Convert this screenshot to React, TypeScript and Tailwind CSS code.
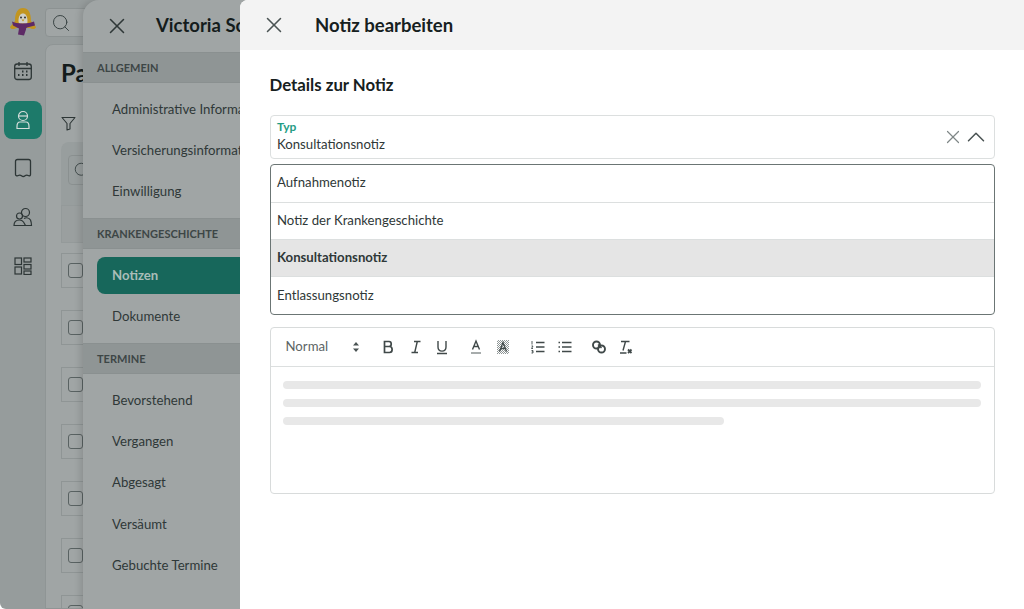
import { Search, X, ChevronUp } from "lucide-react";

const font = { fontFamily: "Lato, 'Noto Sans', sans-serif" };

const allgemein = ["Administrative Informationen", "Versicherungsinformationen", "Einwilligung"];
const termine = ["Bevorstehend", "Vergangen", "Abgesagt", "Versäumt", "Gebuchte Termine"];
const options = ["Aufnahmenotiz", "Notiz der Krankengeschichte", "Konsultationsnotiz", "Entlassungsnotiz"];

const Logo = () => (
  <svg width="32" height="30" viewBox="0 0 30 30">
    <path d="M7 14C7 5 10 1 15 1s8 4 8 13l5 6c0 2-4 3-6 1H8c-2 2-6 1-6-1z" fill="#c29520" />
    <path d="M10.500 14c0-5 1.800-7.500 4.500-7.500s4.500 2.500 4.500 7.500-2 2.500-4.500 2.500-4.500 1-4.500-2.500z" fill="#cfcfc8" />
    <circle cx="13" cy="10.500" r="1" fill="#333" />
    <circle cx="17" cy="10.500" r="1" fill="#333" />
    <path d="M13.500 12.500h3L15 14.500z" fill="#c29520" />
    <path d="M4 14.500c4 2.500 17 2.500 22 0l1 4-8 2-1 1 0 1-2 6-6-1 1-6-6-3z" fill="#5e2a66" />
  </svg>
);

const CalendarIcon = () => (
  <svg width="20" height="20" viewBox="0 0 20 20" fill="none" stroke="#2d3636" strokeWidth="1.300">
    <rect x="1.700" y="3" width="16.600" height="15.500" rx="2.500" />
    <path d="M1.700 7.500h16.600M6 1v4M14 1v4" />
    <path d="M9 10.500h1.500M13 10.500h1.500M5 14h1.500M9 14h1.500M13 14h1.500" strokeWidth="1.800" />
  </svg>
);

const PatientIcon = () => (
  <svg width="20" height="20" viewBox="0 0 20 20" fill="none" stroke="#d5dedb" strokeWidth="1.200">
    <circle cx="10" cy="6" r="4.500" />
    <path d="M5.500 6h9" />
    <path d="M7 12h6c2 0 3 2 3 4.500v2H4v-2C4 14 5 12 7 12z" />
  </svg>
);

const BookmarkIcon = () => (
  <svg width="18" height="20" viewBox="0 0 18 20" fill="none" stroke="#2d3636" strokeWidth="1.300">
    <path d="M1.500 3.500c0-1.200.8-2 2-2h11c1.200 0 2 .8 2 2v13c0 1-.8 1.600-1.700 1.200-1.500-.8-2.800-.8-3.800 0-1 .9-2.500 .9-3.500 0-1-.8-2.300-.8-3.800 0-.9.4-2.200-.2-2.200-1.200z" />
  </svg>
);

const PeopleIcon = () => (
  <svg width="20" height="20" viewBox="0 0 20 20" fill="none" stroke="#2d3636" strokeWidth="1.200">
    <circle cx="12.500" cy="5.500" r="4" />
    <circle cx="6.500" cy="9" r="3" />
    <path d="M1 18.500c0-3.500 2-5.500 5.500-5.500 1.500 0 3 .6 4 2l2 3.500z" />
    <path d="M11 11.500c2-1 5-.8 6.500 1.500.6 1.500 1 3.500 1 5.500H13" />
  </svg>
);

const GridIcon = () => (
  <svg width="18" height="18" viewBox="0 0 18 18" fill="none" stroke="#2d3636" strokeWidth="1.200">
    <rect x="1" y="1" width="6.500" height="6.500" />
    <rect x="10" y="1" width="7" height="4" />
    <rect x="1" y="10" width="6.500" height="7" />
    <rect x="10" y="7.500" width="7" height="4.500" />
    <rect x="10" y="14" width="7" height="3.500" />
  </svg>
);

const FilterIcon = () => (
  <svg width="15" height="15" viewBox="0 0 15 15" fill="none" stroke="#2d3636" strokeWidth="1.100">
    <path d="M1 1.500h13L9 7.500V13l-3 1V7.500z" strokeLinejoin="round" />
  </svg>
);

// Editor toolbar glyphs, all 16px
const ToolIcon = ({ d, w = 1.400, extra }: { d: string; w?: number; extra?: React.ReactNode }) => (
  <svg width="16" height="16" viewBox="0 0 16 16" fill="none" stroke="#404949" strokeWidth={w}>
    <path d={d} />
    {extra}
  </svg>
);

const Section = ({ label }: { label: string }) => (
  <div className="h-[31px] flex items-center pl-[14px] pt-[1px] bg-[#8f9595] border-y border-[#8a9090] text-[11px] font-bold text-[#3d4646] whitespace-nowrap">
    {label}
  </div>
);

const Item = ({ label }: { label: string }) => (
  <div className="h-[41.3px] flex items-center pl-[29px] pt-[1px] text-[13.200px] text-[#2f3838] whitespace-nowrap">{label}</div>
);

const App = () => {
  return (
    <div className="w-[1024px] h-[609px] bg-white overflow-hidden">
    <div style={font} className="relative w-[1024px] h-[609px] overflow-hidden flex bg-[#969c9c] rounded-bl-md">
      {/* rail */}
      <div className="w-[45px] shrink-0 flex flex-col items-center">
        <div className="mt-[7px] mb-[24px]"><Logo /></div>
        <CalendarIcon />
        <div className="mt-[20px] w-[38px] h-[38px] rounded-lg bg-[#1d7a6a] flex items-center justify-center"><PatientIcon /></div>
        <div className="mt-[19px]"><BookmarkIcon /></div>
        <div className="mt-[29px]"><PeopleIcon /></div>
        <div className="mt-[29.500px]"><GridIcon /></div>
      </div>

      {/* page behind */}
      <div className="flex-1 min-w-0 flex flex-col">
        <div className="mt-[8px] h-[29px] shrink-0 w-[300px] border border-[#8c9292] rounded bg-[#a0a5a5] flex items-center pl-[5px]">
          <Search size={20} strokeWidth={1.200} color="#3a4444" />
        </div>
        <div className="mt-[7px] flex-1 min-h-0 overflow-hidden bg-[#a0a5a5] rounded-t-lg border border-[#8f9595] pl-[15px]">
          <div className="text-[24px] font-bold text-[#141c1c] mt-[12px] leading-[32px]">Patienten</div>
          <div className="mt-[27px]"><FilterIcon /></div>
          <div className="mt-[11px] h-[63px] w-[300px] rounded-t-lg bg-[#989e9e] pt-[13px] pl-[7px]">
            <div className="h-[30px] border border-[#8a9090] rounded flex items-center pl-[4px]">
              <Search size={18} strokeWidth={1.200} color="#3a4444" />
            </div>
          </div>
          <div className="h-[38px] w-[300px] border border-[#949a9a] bg-[#9a9f9f]" />
          <div className="mt-[10px] flex flex-col gap-[22px]">
            {[0, 1, 2, 3, 4, 5, 6].map((n) => (
              <div key={n} className="h-[35px] shrink-0 w-[300px] border-l border-t border-b border-[#8f9595] pl-[6px] pt-[9px]">
                <div className="w-[15px] h-[15px] rounded-[3px] border border-[#596262]" />
              </div>
            ))}
          </div>
        </div>
      </div>

      {/* patient drawer */}
      <div className="absolute left-[83px] top-0 bottom-0 right-0 bg-[#a0a5a5] rounded-tl-2xl shadow-[-3px_0_6px_rgba(0,0,0,0.12)] overflow-hidden">
        <div className="h-[52px] flex items-center pl-[20.500px]">
          <X size={26} strokeWidth={1.400} color="#2f3838" />
          <span className="ml-[26.500px] text-[18.500px] font-bold text-[#141c1c] whitespace-nowrap">Victoria Schneider</span>
        </div>
        <Section label="ALLGEMEIN" />
        <div className="pt-[5.500px] pb-[5.500px]">
          {allgemein.map((label) => <Item key={label} label={label} />)}
        </div>
        <Section label="KRANKENGESCHICHTE" />
        <div className="pt-[8px] pb-[5px]">
          <div className="ml-[14px] h-[37px] rounded-l-lg bg-[#17675b] flex items-center pl-[15px] pt-[1px] text-[13.200px] font-bold text-[#a9bdb8]">Notizen</div>
          <div className="mt-[1px] h-[43px] flex items-center pl-[29px] pt-[1px] text-[13.200px] text-[#2f3838]">Dokumente</div>
        </div>
        <Section label="TERMINE" />
        <div className="pt-[5.500px]">
          {termine.map((label) => <Item key={label} label={label} />)}
        </div>
      </div>

      {/* note drawer */}
      <div className="absolute left-[240px] top-0 bottom-0 right-0 bg-white rounded-tl-lg overflow-hidden">
        <div className="h-[50px] bg-[#f3f3f3] flex items-center pl-[21px]">
          <X size={26} strokeWidth={1.400} color="#4a5353" />
          <span className="ml-[28px] pt-[1px] text-[18.500px] font-bold text-[#162020]">Notiz bearbeiten</span>
        </div>
        <div className="pl-[29.500px] pr-[29px]">
          <div className="mt-[25px] h-[20px] flex items-center text-[16.800px] font-bold text-[#162020]">Details zur Notiz</div>

          <div className="mt-[20px] h-[44px] border border-[#dcdfdf] rounded flex items-center pl-[6.500px] pr-[3.500px]">
            <div className="flex-1 flex flex-col">
              <span className="text-[12px] font-bold leading-[12px] text-[#1f9c84]">Typ</span>
              <span className="mt-[2.500px] text-[13.200px] leading-[17px] text-[#2f3838]">Konsultationsnotiz</span>
            </div>
            <X size={22} strokeWidth={1.300} color="#7f8787" />
            <ChevronUp size={30} strokeWidth={1.200} color="#4a5353" className="ml-[-3.500px]" />
          </div>

          <div className="mt-[5px] h-[151px] border border-[#6b7574] rounded flex flex-col overflow-hidden">
            {options.map((label, i) => (
              <div
                key={label}
                className={
                  i === 2
                    ? "flex-1 flex items-center pl-[6.500px] bg-[#e5e5e5] border-b border-[#dcdfdf] text-[13.200px] font-bold text-[#2f3838]"
                    : i === 3
                    ? "flex-1 flex items-center pl-[6.500px] pt-[1px] text-[13.200px] text-[#2f3838]"
                    : i === 0
                    ? "flex-1 flex items-center pl-[6.500px] pb-[1px] border-b border-[#dcdfdf] text-[13.200px] text-[#2f3838]"
                    : "flex-1 flex items-center pl-[6.500px] border-b border-[#dcdfdf] text-[13.200px] text-[#2f3838]"
                }
              >
                {label}
              </div>
            ))}
          </div>

          <div className="mt-[12px] h-[167px] border border-[#d8dbdb] rounded">
            <div className="h-[39px] border-b border-[#dcdfdf] flex items-center pl-[15px] text-[#4a5353]">
              <span className="w-[44px] pb-[1px] text-[13.200px] text-[#5c6565]">Normal</span>
              <svg className="ml-[22px]" width="8" height="12" viewBox="0 0 8 12" fill="#4a5353">
                <path d="M4 1l3 3.500H1zM4 11L1 7.500h6z" />
              </svg>
              <span className="ml-[20px]"><ToolIcon w={1.700} d="M4.500 2.500h4.500c3 0 3 5 0 5H4.500zM4.500 7.500h5c3.500 0 3.500 6 0 6h-5z" /></span>
              <span className="ml-[12px]"><ToolIcon d="M6 2.500h6.500M3.500 13.500H10M9.300 2.500l-2.600 11" /></span>
              <span className="ml-[10px]"><ToolIcon d="M4 2v6c0 5.500 8 5.500 8 0V2M3 14.500h10" /></span>
              <span className="ml-[18px]"><ToolIcon d="M4.500 10.500L8 2l3.500 8.500M5.800 7.500h4.400" extra={<path d="M3 14h10" stroke="#8a9191" strokeWidth="1.500" />} /></span>
              <span className="ml-[11px]">
                <svg width="16" height="16" viewBox="0 0 16 16" fill="none">
                  <defs>
                    <pattern id="hatch" width="2" height="2" patternUnits="userSpaceOnUse">
                      <rect width="1" height="1" fill="#8f9696" />
                      <rect x="1" y="1" width="1" height="1" fill="#8f9696" />
                    </pattern>
                  </defs>
                  <rect x="2" y="1" width="12" height="14" fill="url(#hatch)" />
                  <path d="M4.500 12.500L8 3.500l3.500 9M5.800 9.500h4.400" stroke="#404949" strokeWidth="1.300" />
                </svg>
              </span>
              <span className="ml-[19px]"><ToolIcon d="M6 3.500h8.500M6 8h8.500M6 12.500h8.500" extra={<path d="M2 2v3.500M1.500 7h1.500l-1.500 2.500H3M1.500 11.500h1.500v2.500H1.500M1.800 12.800H3" strokeWidth="0.900" />} /></span>
              <span className="ml-[11px]"><ToolIcon d="M5 3.500h9.500M5 8h9.500M5 12.500h9.500M1.500 3.500h1.500M1.500 8h1.500M1.500 12.500h1.500" /></span>
              <span className="ml-[18px]">
                <ToolIcon
                  d="M7 5.500L10.500 9"
                  extra={<><circle cx="5.500" cy="6" r="3.500" strokeWidth="1.900" /><circle cx="10.500" cy="10" r="3.500" strokeWidth="1.900" /></>}
                />
              </span>
              <span className="ml-[10px]"><ToolIcon d="M4 2.500h8.500M8.500 2.500l-2.500 9M3 14h6.500" extra={<path d="M11 10.500l3.500 3.500M14.500 10.500L11 14" strokeWidth="1.800" />} /></span>
            </div>
            <div className="pl-[12.500px] pr-[13px] pt-[14px] flex flex-col gap-[10px]">
              <div className="h-[8px] rounded-full bg-[#e8e8e8]" />
              <div className="h-[8px] rounded-full bg-[#e8e8e8]" />
              <div className="h-[8px] w-[441px] rounded-full bg-[#e8e8e8]" />
            </div>
          </div>
        </div>
      </div>
    </div>
    </div>
  );
};

export default App;
